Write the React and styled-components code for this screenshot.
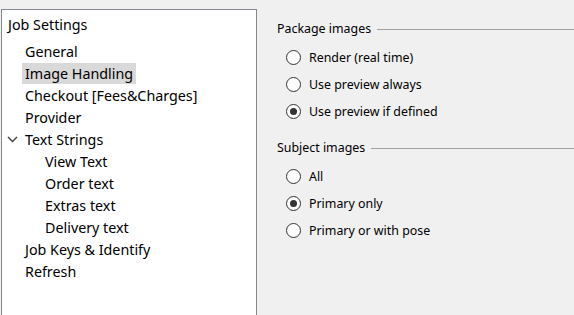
import React from "react";
import styled, { createGlobalStyle } from "styled-components";

const GlobalStyle = createGlobalStyle`
    html, body {
        margin: 0;
        padding: 0;
        height: 100%;
        overflow: hidden;
        background: #f0f0f0;
    }
    #root {
        height: 100%;
    }
`;

const tree = [
    { label: "General", level: 1 },
    { label: "Image Handling", level: 1, selected: true },
    { label: "Checkout [Fees&Charges]", level: 1 },
    { label: "Provider", level: 1 },
    { label: "Text Strings", level: 1, expanded: true },
    { label: "View Text", level: 2 },
    { label: "Order text", level: 2 },
    { label: "Extras text", level: 2 },
    { label: "Delivery text", level: 2 },
    { label: "Job Keys & Identify", level: 1 },
    { label: "Refresh", level: 1 },
];

const groups = [
    {
        title: "Package images",
        options: ["Render (real time)", "Use preview always", "Use preview if defined"],
        selected: 2,
    },
    {
        title: "Subject images",
        options: ["All", "Primary only", "Primary or with pose"],
        selected: 1,
    },
];

const Chevron = () => (
    <svg width="11" height="7" viewBox="0 0 11 7">
        <path d="M1 1 L5.5 5.5 L10 1" fill="none" stroke="#404040" strokeWidth="1.4" />
    </svg>
);

const App = () => {
    return (
        <Window>
            <GlobalStyle />
            <TreePanel>
                <RootRow>Job Settings</RootRow>
                {tree.map((item) => (
                    <TreeRow key={item.label} $level={item.level}>
                        {item.expanded && (
                            <Expander>
                                <Chevron />
                            </Expander>
                        )}
                        <TreeLabel $selected={item.selected}>{item.label}</TreeLabel>
                    </TreeRow>
                ))}
            </TreePanel>

            <SettingsPane>
                {groups.map((group) => (
                    <Group key={group.title}>
                        <GroupTitle>
                            <span>{group.title}</span>
                            <Rule />
                        </GroupTitle>
                        <OptionList>
                            {group.options.map((opt, i) => (
                                <Option key={opt}>
                                    <Radio $checked={i === group.selected} />
                                    <span>{opt}</span>
                                </Option>
                            ))}
                        </OptionList>
                    </Group>
                ))}
            </SettingsPane>
        </Window>
    );
};

const Window = styled.div`
    display: flex;
    height: 100%;
    font-family: "Noto Sans", "Open Sans", sans-serif;
    color: #000;
`;

const TreePanel = styled.div`
    width: 256px;
    margin: 9px 0 0 1px;
    flex-shrink: 0;
    background: #fff;
    border: 1px solid #828790;
    border-bottom: none;
    padding-top: 4px;
    box-sizing: border-box;
    display: flex;
    flex-direction: column;
`;

const RootRow = styled.div`
    height: 22px;
    line-height: 22px;
    padding-left: 6px;
    margin-bottom: 4px;
    font-size: 14.3px;
`;

const TreeRow = styled.div`
    position: relative;
    height: 22px;
    display: flex;
    align-items: center;
    padding-left: ${(p) => (p.$level === 1 ? 20 : 40)}px;
    font-size: 14.3px;
`;

const Expander = styled.span`
    position: absolute;
    left: 5px;
    top: 8px;
    display: flex;
`;

const TreeLabel = styled.span`
    display: inline-block;
    height: 21px;
    line-height: 21px;
    padding: 0 3px;
    background: ${(p) => (p.$selected ? "#d9d9d9" : "transparent")};
`;

const SettingsPane = styled.div`
    flex: 1;
    padding: 21px 0 0 20px;
    display: flex;
    flex-direction: column;
    gap: 15px;
    font-size: 12.4px;
`;

const Group = styled.div`
    display: flex;
    flex-direction: column;
`;

const GroupTitle = styled.div`
    height: 16px;
    line-height: 16px;
    display: flex;
    align-items: center;
    gap: 6px;
    white-space: nowrap;
`;

const Rule = styled.div`
    flex: 1;
    height: 1px;
    background: #a0a0a0;
    margin-top: 1px;
`;

const OptionList = styled.div`
    margin-top: 7px;
    padding-left: 9px;
    display: flex;
    flex-direction: column;
`;

const Option = styled.label`
    height: 27px;
    display: flex;
    align-items: center;
    gap: 8px;
`;

const Radio = styled.span`
    width: 13px;
    height: 13px;
    border: 1px solid #333;
    border-radius: 50%;
    background: #fff;
    position: relative;
    flex-shrink: 0;

    &::after {
        content: "";
        display: ${(p) => (p.$checked ? "block" : "none")};
        position: absolute;
        left: 3px;
        top: 3px;
        width: 7px;
        height: 7px;
        border-radius: 50%;
        background: #333;
    }
`;

export default App;
